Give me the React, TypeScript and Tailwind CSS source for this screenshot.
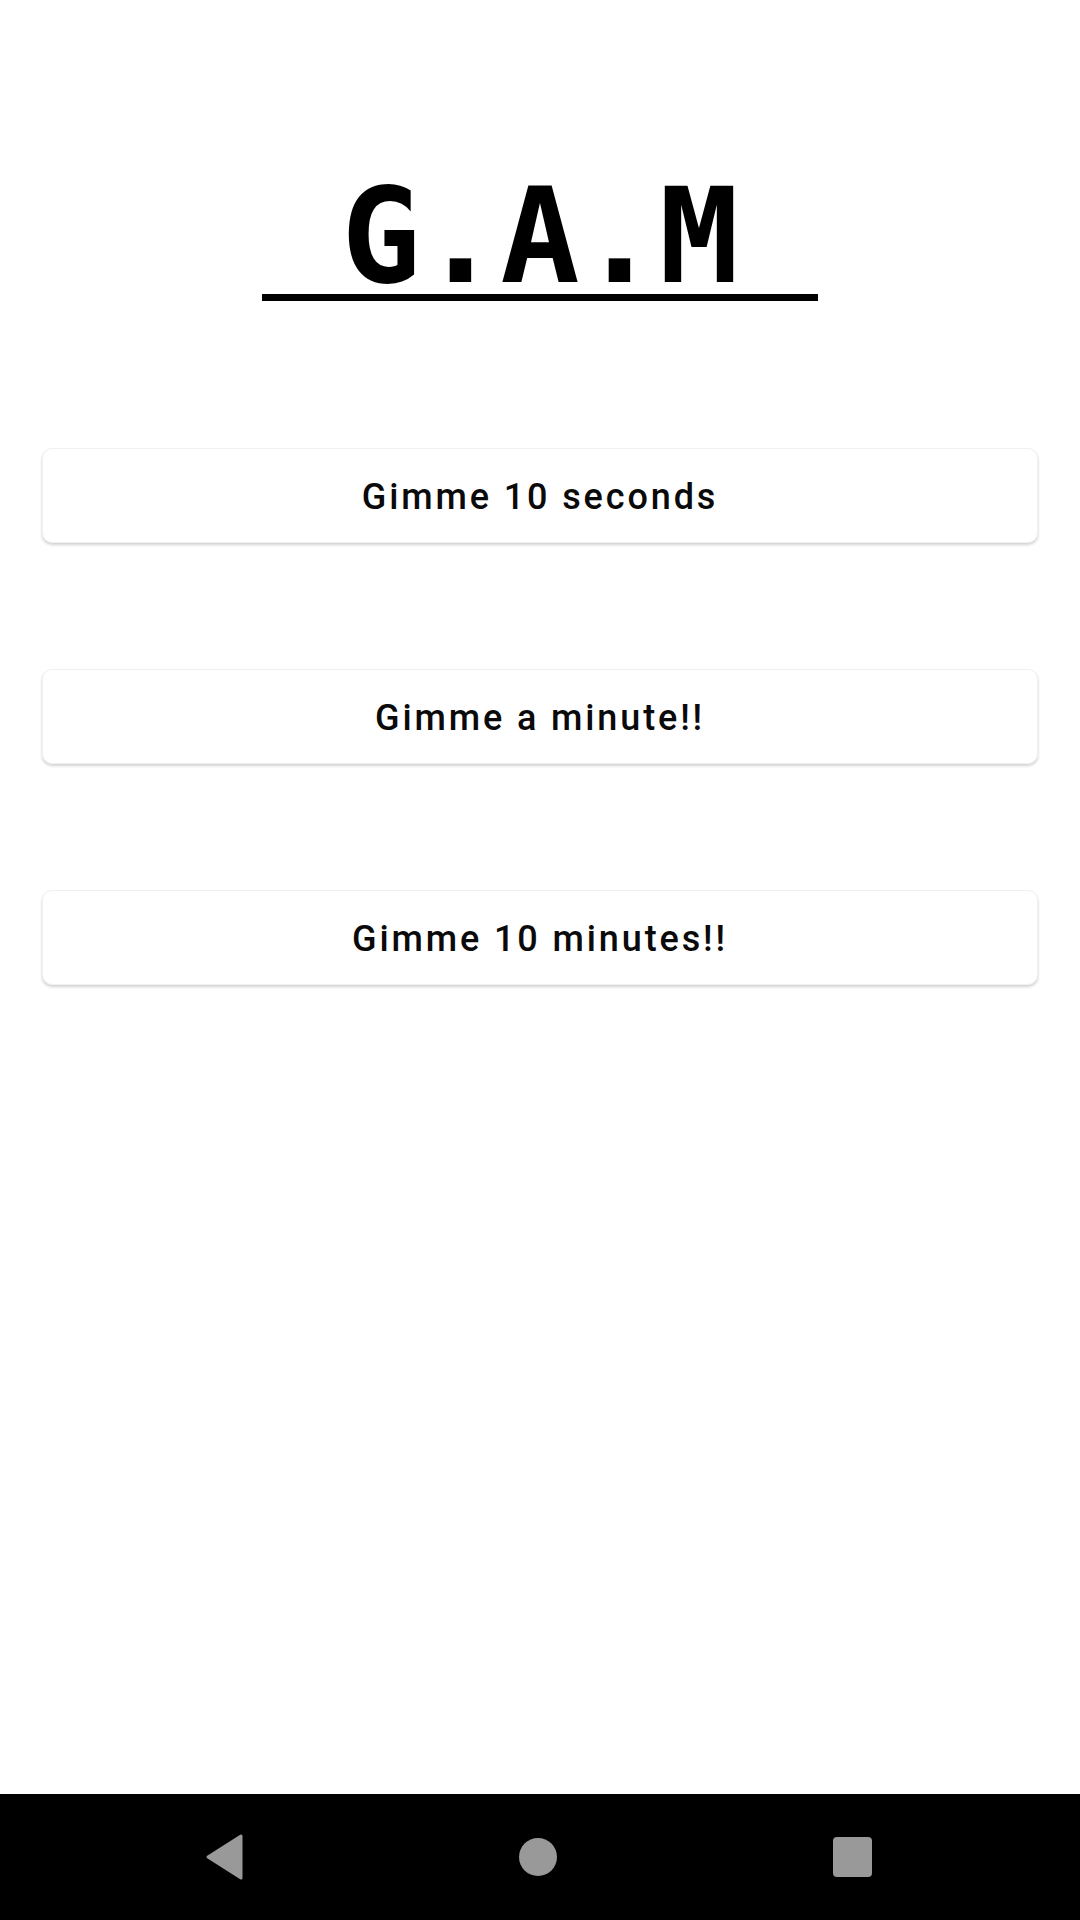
import React from "react";

const OPTIONS = ["Gimme 10 seconds", "Gimme a minute!!", "Gimme 10 minutes!!"];

function NavBar() {
  return (
    <nav className="flex h-[126px] w-full shrink-0 items-center bg-black">
      <div className="flex w-full items-center justify-between pl-[205px] pr-[208px]">
        {/* back */}
        <svg width="38" height="46" viewBox="0 0 38 46" aria-hidden>
          <polygon
            points="36,2 36,44 3,23"
            fill="#999999"
            stroke="#999999"
            strokeWidth="3"
            strokeLinejoin="round"
          />
        </svg>
        {/* home */}
        <div className="h-[38px] w-[38px] rounded-full bg-[#999999]" />
        {/* recents */}
        <div className="h-[40px] w-[39px] rounded-[4px] bg-[#999999]" />
      </div>
    </nav>
  );
}

export default function App() {
  return (
    <div className="flex h-[1920px] w-[1080px] flex-col bg-white">
      <main className="flex flex-1 flex-col items-center pt-[182px]">
        {/* logo text with the long underline */}
        <div className="inline-block whitespace-pre border-b-[7px] border-black pb-[3px] font-['DejaVu_Sans_Mono',monospace] text-[132px] font-bold leading-[109px] text-black">
          {" G.A.M "}
        </div>

        <div className="mt-[147px] flex w-full flex-col gap-[126px] px-[42px]">
          {OPTIONS.map((label) => (
            <button
              key={label}
              type="button"
              className="flex h-[95px] w-full items-center justify-center rounded-[10px] border border-[#f0f0f0] bg-white pt-[2px] font-['Roboto',sans-serif] text-[36px] font-medium tracking-[0.08em] text-[#0a0a0a] shadow-[0_2px_3px_rgba(0,0,0,0.18)]"
            >
              {label}
            </button>
          ))}
        </div>
      </main>
      <NavBar />
    </div>
  );
}
